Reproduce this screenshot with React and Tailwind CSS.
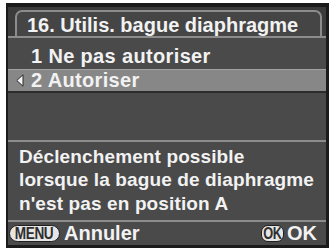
export default function App() {
  const font = { fontFamily: '"Liberation Sans", Arial, sans-serif' };
  return (
    <div className="w-[329px] h-[248px] bg-white pl-[6px] pt-[3px] flex" style={font}>
      <div className="flex-1 flex bg-[#1b1b1b] pt-[4px] pl-[2px] pr-[3px] pb-[3px]">
        <div className="flex-1 flex flex-col bg-[#4a4a4a] text-[#f2f2f2] font-bold">
          {/* header */}
          <div className="flex pt-[3px] pl-[7px] pr-[4px] bg-[#3b3b3b] border-b-2 border-[#8c8c8c]">
            <div className="flex-1 border-t-2 border-l-2 border-r-2 border-[#8c8c8c] rounded-t-[7px] bg-[#454545] pt-[2px] pl-[10px] text-[20px] leading-[22px] tracking-[0px] whitespace-nowrap">
              16. Utilis. bague diaphragme
            </div>
          </div>
          {/* row 1 */}
          <div className="h-[31px] pt-[7px] pl-[23px] text-[20px] leading-[22px] tracking-[0.35px] whitespace-nowrap">
            1 Ne pas autoriser
          </div>
          {/* selected row */}
          <div className="h-[24px] flex items-start bg-[#878787] border-t border-[#a2a2a2] border-b-2 border-b-[#2c2c2c] text-[20px] leading-[21px] tracking-[0.35px] whitespace-nowrap">
            <div className="w-[23px] h-[21px] flex items-center pl-[8px]">
              <svg width="8" height="13" viewBox="0 0 8 13">
                <path d="M7 0.8 L0.8 6.5 L7 12.2 Z" fill="#f4f4f4" stroke="#2a2a2a" strokeWidth="1" strokeLinejoin="round" />
              </svg>
            </div>
            <span>2 Autoriser</span>
          </div>
          {/* empty */}
          <div className="flex-1" />
          {/* description */}
          <div className="border-t-2 border-[#8c8c8c] pt-[3px] pb-[5px] pl-[11px] text-[19px] leading-[23.33px] tracking-[0.12px] whitespace-nowrap">
            <div>Déclenchement possible</div>
            <div>lorsque la bague de diaphragme</div>
            <div>n'est pas en position A</div>
          </div>
          {/* footer */}
          <div className="h-[25px] border-t-2 border-[#8c8c8c] flex items-center pl-[1px] pr-[9px] text-[20px] leading-[23px]">
            <div className="w-[51px] h-[17px] rounded-full bg-[#e6e6e6] border-[1.5px] border-[#1e1e1e] flex items-center justify-center overflow-hidden">
              <span className="text-[#2e2e2e] text-[17px] leading-[17px] tracking-[-0.5px] scale-x-[0.8] inline-block">MENU</span>
            </div>
            <span className="ml-[4px]">Annuler</span>
            <div className="flex-1" />
            <div className="w-[23px] h-[17px] rounded-[7px] bg-[#e6e6e6] border-[1.5px] border-[#1e1e1e] flex items-center justify-center overflow-hidden">
              <span className="text-[#2e2e2e] text-[16px] leading-[16px] tracking-[-0.5px] scale-x-[0.8] inline-block">OK</span>
            </div>
            <span className="ml-[3px]">OK</span>
          </div>
        </div>
      </div>
    </div>
  );
}
